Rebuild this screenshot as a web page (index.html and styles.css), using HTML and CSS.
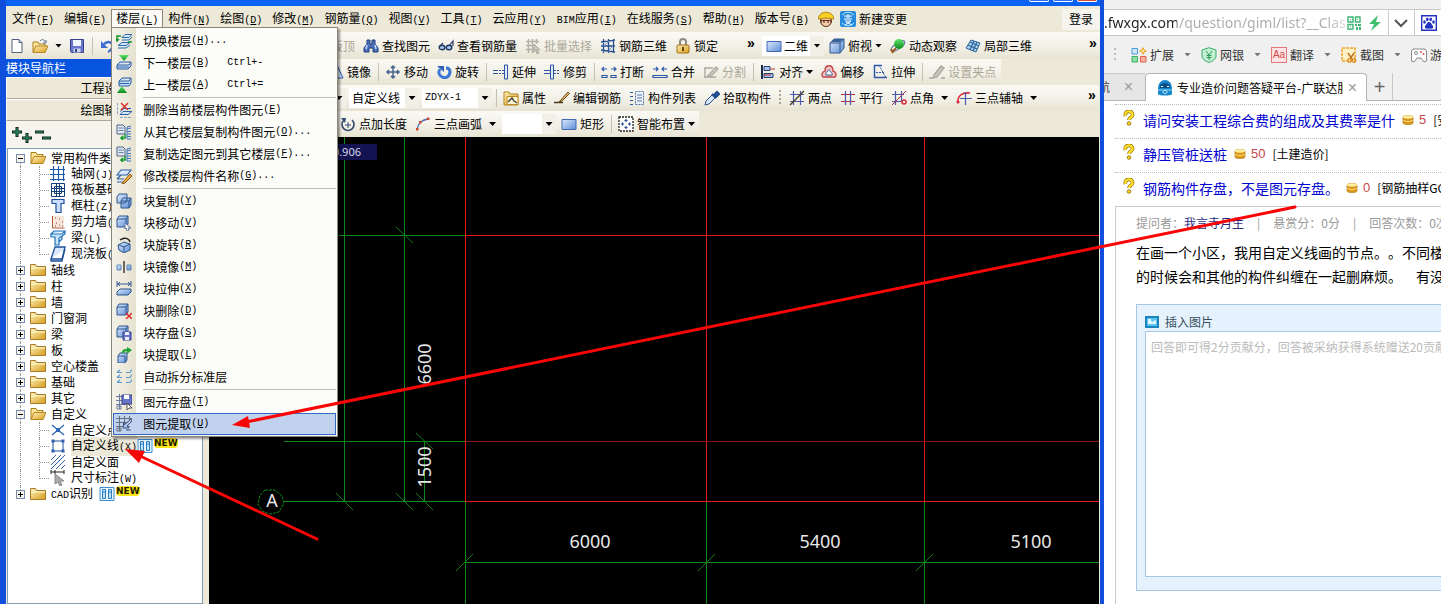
FILE: index.html
```html
<!DOCTYPE html>
<html lang="zh-CN">
<head>
<meta charset="utf-8">
<title>钢筋抽样</title>
<link rel="stylesheet" href="styles.css">
</head>
<body>
<svg class="defs" aria-hidden="true">
  <defs>
    <linearGradient id="gb" x1="0" y1="0" x2="1" y2="1"><stop offset="0" stop-color="#dbe9fc"/><stop offset="1" stop-color="#5f8fd6"/></linearGradient>
    <linearGradient id="gf" x1="0" y1="0" x2="1" y2="1"><stop offset="0" stop-color="#fff3b8"/><stop offset="1" stop-color="#d99a1c"/></linearGradient>
    <linearGradient id="gg" x1="0" y1="0" x2="0" y2="1"><stop offset="0" stop-color="#5fe36a"/><stop offset="1" stop-color="#0a8a1c"/></linearGradient>
  </defs>
  <symbol id="new" viewBox="0 0 16 16"><path d="M3 1.500h7l3 3v10H3z" fill="#fff" stroke="#52617c"/><path d="M10 1.500v3h3" fill="#c5d4ea" stroke="#52617c"/></symbol>
  <symbol id="open" viewBox="0 0 16 16"><path d="M1 14V4h5l1 2h6v3" fill="#ffe59a" stroke="#a87d1c"/><path d="M1 14.500 4 8h12l-3 6.500z" fill="url(#gf)" stroke="#b58522"/><path d="M8 3c2-2 4-2 5 1m1-2v3h-3" fill="none" stroke="#58709b"/></symbol>
  <symbol id="openf" viewBox="0 0 16 16"><path d="M1 13.500V2.500h5l1 2h6v3" fill="#ffe59a" stroke="#a87d1c"/><path d="M1 13.500 4 6.500h12l-3 7z" fill="url(#gf)" stroke="#b58522"/></symbol>
  <symbol id="save" viewBox="0 0 16 16"><path d="M1.500 1.500h13v13h-12l-1-1z" fill="#6875c8" stroke="#35408e"/><path d="M4 2h8v6H4z" fill="#f1f5ff"/><path d="M4.500 10.500h7v4h-7z" fill="#d2d8ee"/><path d="M6 11h2v3H6z" fill="#35408e"/></symbol>
  <symbol id="undo" viewBox="0 0 16 16"><path d="M4 6c5-4 10-1 8 4-1 2-2 3-4 4" fill="none" stroke="#3d6fd0" stroke-width="2.500"/><path d="M1 3v7h7z" fill="#3d6fd0"/></symbol>
  <symbol id="find" viewBox="0 0 16 16"><path d="M4 2h3v4h2V2h3v4l3 4v4h-5v-4H6v4H1v-4l3-4z" fill="#4b6fb8" stroke="#233f7c"/><path d="M4 7l-1 4M12 7l1 4" stroke="#c8dbff" stroke-width="1.500"/></symbol>
  <symbol id="glasses" viewBox="0 0 16 16"><path d="M2 8l3-3M11 8l4-5v5" fill="none" stroke="#2c3d63" stroke-width="1.200"/><ellipse cx="4" cy="9.500" rx="2.800" ry="2.200" fill="#a8c8ef" stroke="#20355f" stroke-width="1.400"/><ellipse cx="11" cy="9.500" rx="2.800" ry="2.200" fill="#a8c8ef" stroke="#20355f" stroke-width="1.400"/></symbol>
  <symbol id="gridsel" viewBox="0 0 16 16"><path d="M1 3.500h13M1 7.500h8M1 11.500h8M3.500 1v14M7.500 1v14M11.500 1v5" stroke="#b4b3a9" stroke-width="1.500"/><path d="M9 6l6 6h-3l2 3-2 1-1-4-2 2z" fill="#c9c8bf" stroke="#aaa99f"/></symbol>
  <symbol id="grid3d" viewBox="0 0 16 16"><path d="M1 4l14-2M1 8h14M1 12l14 2M3.500 1v14M8.500 1v14M13.500 1v14" stroke="#274f91" fill="none" stroke-width="1.300"/><path d="M4 8l4-4M9 12l4-4" stroke="#6c99da"/></symbol>
  <symbol id="lock" viewBox="0 0 16 16"><path d="M5 8V4c0-4 6-4 6 0v4" fill="none" stroke="#8d8b85" stroke-width="2"/><rect x="2" y="7" width="12" height="8" rx="1" fill="url(#gf)" stroke="#a0701a"/><path d="M8 9v4" stroke="#6a4307" stroke-width="2"/></symbol>
  <symbol id="rect" viewBox="0 0 16 16"><path d="M1 3.500h14v10H1z" fill="url(#gb)" stroke="#4469b4"/></symbol>
  <symbol id="cube" viewBox="0 0 16 16"><path d="M1 5l4-4h10v9l-4 5H1z" fill="url(#gb)" stroke="#35578f"/><path d="M1 5h10v10M11 5l4-4" fill="none" stroke="#35578f"/><path d="M2 4l4-3h8l-3 3z" fill="#3b6196"/></symbol>
  <symbol id="orbit" viewBox="0 0 16 16"><ellipse cx="8" cy="8" rx="8" ry="3" transform="rotate(-35 8 8)" fill="#fff" stroke="#54729b"/><circle cx="9" cy="6" r="5" fill="url(#gg)"/><path d="M2 14l4-4M1 11l2 4" stroke="#a05c24" stroke-width="2"/></symbol>
  <symbol id="part3d" viewBox="0 0 16 16"><path d="M1 10 6 2l9 3-4 9z" fill="#acd0ef" stroke="#2e6398"/><path d="M3 7l9 4M5 4l9 4M9 3l-4 9M12 4 8 13" stroke="#2e6398" stroke-width="1.200"/></symbol>
  <symbol id="mirror" viewBox="0 0 16 16"><path d="M7 2v12H0zM9.500 2v12H15z" fill="#cfe0fa" stroke="#2d56a0"/></symbol>
  <symbol id="move" viewBox="0 0 16 16"><path d="M8 2v12M2 8h12M6 4l2-2 2 2M6 12l2 2 2-2M4 6 2 8l2 2M12 6l2 2-2 2" fill="none" stroke="#46628f" stroke-width="1.500"/></symbol>
  <symbol id="rotate" viewBox="0 0 16 16"><path d="M4 5c-5 8 9 13 10 3 0-3-2-4-4-4" fill="none" stroke="#3b78d6" stroke-width="3"/><path d="M1 2h7v6z" fill="#2f62b8"/></symbol>
  <symbol id="extend" viewBox="0 0 16 16"><path d="M0 6.500h5M0 9.500h5" stroke="#2c56a3"/><path d="M6 6.500h5M6 9.500h5" stroke="#2c56a3" stroke-dasharray="2 1"/><path d="M11.500 1h3v14h-3z" fill="#dce9fb" stroke="#2c56a3"/></symbol>
  <symbol id="trim" viewBox="0 0 16 16"><path d="M0 6.500h6M0 9.500h6" stroke="#2c56a3"/><path d="M10 6.500h6M10 9.500h6" stroke="#2c56a3" stroke-dasharray="2 1"/><path d="M6.500 1h3v14h-3z" fill="#dce9fb" stroke="#2c56a3"/></symbol>
  <symbol id="break" viewBox="0 0 16 16"><path d="M1 5h5M3 3 1 5l2 2M15 5h-5M13 3l2 2-2 2M1 11.500h5v2H1zM10 11.500h5v2h-5z" fill="none" stroke="#2f5aa8" stroke-width="1.200"/></symbol>
  <symbol id="merge" viewBox="0 0 16 16"><path d="M1 5h5M4 3l2 2-2 2M15 5h-5M12 3l-2 2 2 2M1 11.500h14v2H1z" fill="none" stroke="#2f5aa8" stroke-width="1.200"/></symbol>
  <symbol id="split" viewBox="0 0 16 16"><path d="M1 4h9M1 13h12M2 4v9M5 12l8-9 2 2-8 8z" fill="#d8d7ce" stroke="#aaa99f" stroke-width="1.300"/></symbol>
  <symbol id="align" viewBox="0 0 16 16"><path d="M2 1v14" stroke="#1b2a4d" stroke-width="2"/><path d="M4 2.500h6v4H4zM4 9.500h9v4H4z" fill="#a8c3ee" stroke="#27406f"/><path d="M15 5h-5M4 11h7" stroke="#c22a2a"/></symbol>
  <symbol id="offset" viewBox="0 0 16 16"><path d="M2 13c-2-2-1-5 2-6 0-7 8-7 8 0 3 1 4 4 2 6z" fill="#f3c6c6" stroke="#c24545" stroke-width="1.400"/><path d="M5 11c-1-2 1-2 1.500-4 1-2 2.500-1 3 1 2 1 2 2 1.500 3z" fill="#fff" stroke="#35578f"/></symbol>
  <symbol id="stretch" viewBox="0 0 16 16"><path d="M10 1.500H2.500v12H15" fill="none" stroke="#2f5aa8" stroke-width="1.500"/><path d="M7 1l7 13M4 8.500h8" fill="none" stroke="#2f5aa8" stroke-dasharray="2 1"/></symbol>
  <symbol id="grip" viewBox="0 0 16 16"><path d="M0 14h4m8 0h4M5 11l7-9 3 2-7 9-4 1z" fill="#c9c8bf" stroke="#aaa99f" stroke-width="1.300"/></symbol>
  <symbol id="prop" viewBox="0 0 16 16"><path d="M1 2h5l1 2h8v11H1z" fill="url(#gf)" stroke="#b58522"/><path d="M4 6.500h11v8H4z" fill="#fff7cf" stroke="#c08a22"/><path d="M5 12l4-4 2 3 3 2" fill="none" stroke="#444" stroke-width="1.500"/></symbol>
  <symbol id="editbar" viewBox="0 0 16 16"><path d="M0 12.500h9" stroke="#4a3b20" stroke-width="1.500"/><path d="M5 12 14 2l1.500 1.500L8 11l-3 1z" fill="#e0b267" stroke="#6d4c1a"/></symbol>
  <symbol id="list" viewBox="0 0 16 16"><path d="M1 2.500h3M1 6.500h3M1 10.500h3M1 14.500h3" stroke="#2f5aa8"/><path d="M6.500 1.500h8v13h-8z" fill="#eef4fd" stroke="#5574a8" stroke-dasharray="2 1"/><path d="M8 5h5M8 8h5M8 11h5" stroke="#5574a8"/></symbol>
  <symbol id="pick" viewBox="0 0 16 16"><path d="M1 15l1-4 7-7 3 3-7 7z" fill="#d8e7fa" stroke="#2b4f86"/><path d="M8 4l4 4M10 5l3-3 2 2-3 3z" fill="#2f6ac0" stroke="#1e4788" stroke-width="2"/></symbol>
  <symbol id="two" viewBox="0 0 16 16"><path d="M1 4.500h14M1 11.500h14M4.500 1v14M11.500 1v14" stroke="#4a5aa8" stroke-width="1.200"/><path d="M1 15 15 1" stroke="#4c4424" stroke-width="1.500"/></symbol>
  <symbol id="par" viewBox="0 0 16 16"><path d="M1 4.500h14M1 11.500h14" stroke="#b02d45" stroke-width="1.200"/><path d="M5.500 1v14M10.500 1v14" stroke="#4a5aa8" stroke-width="1.200"/></symbol>
  <symbol id="ang" viewBox="0 0 16 16"><path d="M1 4.500h12M1 11.500h10M4.500 1v14M10.500 1v10" stroke="#4a5aa8" stroke-width="1.200"/><path d="M1 15 15 1" stroke="#b02d45"/><circle cx="13" cy="12" r="2" fill="none" stroke="#d92a3e" stroke-width="1.500"/></symbol>
  <symbol id="arcaxis" viewBox="0 0 16 16"><path d="M2 13C1 6 6 2 14 3" fill="none" stroke="#d92a3e" stroke-width="1.600"/><path d="M4 8.500h12M9.500 2v13" stroke="#4a5aa8" stroke-width="1.200"/><circle cx="2" cy="12" r="1.600" fill="#d92a3e"/></symbol>
  <symbol id="ptlen" viewBox="0 0 16 16"><path d="M4 4a6 6 0 1 0 8 0" fill="none" stroke="#33496f" stroke-width="1.600"/><path d="M1 2h5L5 7z" fill="#33496f"/><path d="M5 9h6M8 6v6" stroke="#33496f"/></symbol>
  <symbol id="arc" viewBox="0 0 16 16"><path d="M2 14C3 7 6 4 13 3" fill="none" stroke="#4a62a8" stroke-width="1.300"/><path d="M1 12h2.500v2.500H1zM4 5h2.500v2.500H4zM12 1.500h2.500V4H12z" fill="#cf4a34"/></symbol>
  <symbol id="smart" viewBox="0 0 16 16"><path d="M1 1h14v14H1z" fill="#fff" stroke="#222" stroke-dasharray="2 1" stroke-width="1.300"/><path d="M8 3v3M8 10v3M3 8h3M10 8h3M6.500 4.500h3M6.500 11.500h3M4.500 6.500v3M11.500 6.500v3" stroke="#294f92" stroke-width="1.200"/></symbol>
  <symbol id="worker" viewBox="0 0 16 16"><circle cx="8" cy="10" r="5.500" fill="#f1c39c" stroke="#5a2f1c"/><path d="M3 9h10l-1 5-2-2H6l-2 2z" fill="#6b3020"/><path d="M4 10h8v3l-4 2-4-2z" fill="#f4cda8"/><path d="M0 8C1-1 15-1 16 8l-8-1z" fill="#f7cf27" stroke="#b1860c"/><path d="M5 11h2M9 11h2" stroke="#311"/></symbol>
  <symbol id="change" viewBox="0 0 16 16"><rect width="16" height="16" rx="2" fill="#278be0"/><path d="M2 4a8 8 0 0 1 12 0M2 12a8 8 0 0 0 12 0" stroke="#aee0ff" fill="none"/><path d="M4 5h8M8 3v2M7 5v4M9 5v4M5 7v2M11 7v2M5 10h6l-6 4M6 11l6 3" stroke="#fff" fill="none"/></symbol>
  <symbol id="layers" viewBox="0 0 16 16"><path d="M2 12.500h8l4-3H6zM2 15h8l4-3M6 4.500h7l3-3H9zM6 7h7l3-3" fill="#d2e6fb" stroke="#2d6ba6"/><path d="M5 3H1v4M0 5l1 3 2-2M12 9h3v-1" fill="none" stroke="#12962c" stroke-width="1.500"/></symbol>
  <symbol id="down" viewBox="0 0 16 16"><path d="M3 0h10L8 6z" fill="url(#gg)"/><path d="M1 10l3-3h11l-2 3zM1 10v4h11l3-3V7M1 12h12" fill="#c6defa" stroke="#2c5fa5"/></symbol>
  <symbol id="up" viewBox="0 0 16 16"><path d="M3 4l3-3h9l-2 3zM3 4v5h10l2-3V1M3 6.500h10" fill="#c6defa" stroke="#2c5fa5"/><path d="M1 16h10L6 9z" fill="url(#gg)"/></symbol>
  <symbol id="dellayer" viewBox="0 0 16 16"><path d="M1.500 1v12M4 15.500h12" stroke="#8ba2c8" stroke-dasharray="3 1"/><path d="M4 12.500h8l4-3H7zM4 9.500l4-3h7" fill="#d2e6fb" stroke="#2c5fa5"/><path d="M5 1l7 7M12 1 5 8" stroke="#d33" stroke-width="1.500"/></symbol>
  <symbol id="copylayer" viewBox="0 0 16 16"><path d="M1 1h6l2 2v7H1z" fill="#dfe7f2" stroke="#4f6484"/><path d="M2.500 4h5M2.500 6.500h5" stroke="#6d82a2"/><path d="M11 3l4-1M11 5l4-1M11 7.500h4M11 10h4M11 12.500h4M11 15h4M11 3v12" stroke="#3d76bd"/><path d="M9 10v4H5M7 12l-2 2 2 2" fill="none" stroke="#159c31" stroke-width="1.600"/></symbol>
  <symbol id="rename" viewBox="0 0 16 16"><path d="M1 7l4-5h10l-4 5zM1 11l4-4M1 11h7M1 14h7" fill="#dcebfc" stroke="#2c5fa5" stroke-width="1.200"/><path d="M7 14l7-8 2 2-7 7-3 1z" fill="#f0a640" stroke="#8b591c"/></symbol>
  <symbol id="blk" viewBox="0 0 16 16"><path d="M1 4l2-3h9v8l-2 3H1z" fill="url(#gb)" stroke="#2e568e"/><path d="M1 4h9v8M10 4l2-3" fill="none" stroke="#2e568e"/></symbol>
  <symbol id="bcopy" viewBox="0 0 16 16"><path d="M1 4l2-3h8v6l-2 3H1zM5 8l2-3h8v7l-2 3H5z" fill="url(#gb)" stroke="#2e568e"/><path d="M5 8h8v7M13 8l2-3" fill="none" stroke="#2e568e"/></symbol>
  <symbol id="bmove" viewBox="0 0 16 16"><use href="#blk"/><path d="M9 8l6 5h-3l1 2-2 1-1-3-1 1z" fill="#fff" stroke="#64789b"/></symbol>
  <symbol id="brot" viewBox="0 0 16 16"><path d="M2 8l6-3 6 2v6l-6 3-5-3z" fill="url(#gb)" stroke="#2e568e"/><path d="M3 8l5 2v5M8 10l6-3" fill="none" stroke="#2e568e"/><path d="M4 3c4-3 9-2 10 2" fill="none" stroke="#222" stroke-width="1.400"/></symbol>
  <symbol id="bmir" viewBox="0 0 16 16"><path d="M8 2v12" stroke="#222" stroke-width="1.300"/><path d="M1 6h4v5H1zM11 6h4v5h-4z" fill="url(#gb)" stroke="#6387b8"/></symbol>
  <symbol id="bstr" viewBox="0 0 16 16"><path d="M1 3h14M1 0v6M15 0v6M4 1 2 3l2 2M12 1l2 2-2 2" fill="none" stroke="#35578f"/><path d="M1 11l3-3h11v3l-3 3H1z" fill="url(#gb)" stroke="#2e568e"/></symbol>
  <symbol id="bdel" viewBox="0 0 16 16"><use href="#blk"/><path d="M10 10l6 6M16 10l-6 6" stroke="#e02727" stroke-width="1.500"/></symbol>
  <symbol id="bsave" viewBox="0 0 16 16"><use href="#blk"/><path d="M7 7h8v8H7z" fill="#6875c8" stroke="#35408e"/><path d="M9 7h4v3H9zM9 12h4v3H9z" fill="#eef"/></symbol>
  <symbol id="bext" viewBox="0 0 16 16"><path d="M2 9l2-3h7v7l-2 3H2z" fill="url(#gb)" stroke="#2e568e"/><path d="M2 9h7v6" fill="none" stroke="#2e568e"/><path d="M7 6c0-3 2-3 5-3" fill="none" stroke="#22a434" stroke-width="2.500"/><path d="M11 0l5 3-5 4z" fill="#22a434"/></symbol>
  <symbol id="auto" viewBox="0 0 16 16"><path d="M1 3.500 4 1M1 3.500h5M1 8.500 4 6M1 8.500h5M1 13.500 4 11M1 13.500h5M10 3.500h4l2-3M10 8.500h4l2-3M10 13.500h4l2-3" fill="none" stroke="#5a9ad0" stroke-width="1.200"/></symbol>
  <symbol id="esave" viewBox="0 0 16 16"><path d="M0 2.500h6M0 6.500h6M0 10.500h14M3.500 0v15M1 12h4v3H1z" fill="none" stroke="#6c7da0"/><path d="M6 1h10v9H6z" fill="#6875c8" stroke="#35408e"/><path d="M8 1h5v4H8z" fill="#fff"/><path d="M11 9l5 5h-3l-2 2z" fill="#fff" stroke="#555"/></symbol>
  <symbol id="eext" viewBox="0 0 16 16"><path d="M0 2.500h16M0 6.500h12M0 10.500h14M3.500 0v15M8.500 0v12M13.500 0v4M1 12h4v3H1z" fill="none" stroke="#66707f"/><path d="M15 3 8 9V6l-1 6h6l-2-2 5-5z" fill="#b2c5e5" stroke="#3c5584"/><path d="M10 14h5" stroke="#3c5584"/></symbol>
  <symbol id="folder" viewBox="0 0 16 16"><path d="M.5 13.500V2.500h5l1 2h9v9z" fill="url(#gf)" stroke="#a57b2a"/><path d="M1 6h14" stroke="#fffbe0"/></symbol>
  <symbol id="axis" viewBox="0 0 16 16"><path d="M0 3.500h15M0 8.500h15M0 13.500h15M3.500 0v15M8.500 0v15M13.500 0v15" stroke="#1c57a8" stroke-width="1.200"/></symbol>
  <symbol id="raft" viewBox="0 0 16 16"><path d="M1.500 1.500h13v13h-13zM4.500 4.500h7v7h-7zM6.500 2v12M9.500 2v12M2 6.500h12M2 9.500h12" fill="none" stroke="#123f7e"/></symbol>
  <symbol id="col" viewBox="0 0 16 16"><path d="M2 1.500h12v4h-3v9H6v-9H2z" fill="#c9defa" stroke="#1d4f98" stroke-width="1.200"/></symbol>
  <symbol id="wall" viewBox="0 0 16 16"><path d="M2.500 2v12h12" fill="none" stroke="#b05a33"/><path d="M3 2h11v11H3z" fill="#f6e6dc"/><path d="M5 4h1M9 5h1M12 8h1M6 9h1M9 11h1M5 12h1M12 12h1" stroke="#9b3c2a"/></symbol>
  <symbol id="beam" viewBox="0 0 16 16"><path d="M1 4l3-3h11l-3 3zM1 4v3h4v8h4V8l6-4V1M9 12l3-3V6" fill="#c9e4fb" stroke="#2372b8" stroke-width="1.200"/></symbol>
  <symbol id="slab" viewBox="0 0 16 16"><path d="M1 13 5 1h10l-3 12zM1 13v2h11l3-12" fill="#d9e8fb" stroke="#1d4f98" stroke-width="1.300"/></symbol>
  <symbol id="cpt" viewBox="0 0 16 16"><path d="M2 3l12 10M14 3 2 13" stroke="#2d68bd" stroke-width="1.300"/><path d="M6 6h4v4H6z" fill="#2d68bd"/></symbol>
  <symbol id="cline" viewBox="0 0 16 16"><path d="M3 3h10v10H3z" fill="none" stroke="#1d4f98"/><path d="M1.500 1.500h3v3h-3zM11.500 1.500h3v3h-3zM1.500 11.500h3v3h-3zM11.500 11.500h3v3h-3z" fill="#2d5fae"/></symbol>
  <symbol id="cface" viewBox="0 0 16 16"><path d="M1 6l5-5M1 11 11 1M1 15 15 1M6 15l9-9M11 15l4-4" stroke="#2d5fae"/></symbol>
  <symbol id="dim" viewBox="0 0 16 16"><path d="M1 0v4M1 2h13M14 0v4M5 0v4" stroke="#222"/><path d="M5 4l9 7h-4l2 4-2 1-2-4-3 2z" fill="#aaa" stroke="#888"/></symbol>
  <symbol id="book" viewBox="0 0 16 16"><path d="M1 1.500h14v13H1z" fill="#e8f5ff" stroke="#3d8ccc"/><path d="M3.500 3.500h3v9h-3zM9.500 3.500h3v9h-3zM3.500 6h3M9.500 6h3" fill="#bfe4ff" stroke="#2a7cc0"/></symbol>
  <symbol id="q" viewBox="0 0 12 16"><path d="M2.500 6C1 0 10 0 9.500 5 9 8 6 7 6 10" fill="none" stroke="#8a6505" stroke-width="3.600"/><path d="M2.500 6C1 0 10 0 9.500 5 9 8 6 7 6 10" fill="none" stroke="#ffde26" stroke-width="2.400"/><circle cx="6" cy="13.500" r="1.800" fill="#ffd619" stroke="#8a6505" stroke-width=".8"/></symbol>
  <symbol id="coin" viewBox="0 0 12 12"><path d="M1 3c0-2 10-2 10 0v6c0 2-10 2-10 0z" fill="#dc961b" stroke="#b67c1a" stroke-width=".7"/><ellipse cx="6" cy="3" rx="5" ry="1.700" fill="#fff09d"/><path d="M1 6c1 2 9 2 10 0" fill="none" stroke="#ffe47b"/></symbol>
</svg>

<div class="desktop">
<main class="app">
  <header class="titlebar">
    <button class="winbtn" aria-label="最小化"></button><button class="winbtn" aria-label="最大化"></button><button class="winbtn close" aria-label="关闭"></button>
  </header>

  <nav class="menubar">
    <button class="menu">文件<span class="key">(<u>F</u>)</span></button>
    <button class="menu">编辑<span class="key">(<u>E</u>)</span></button>
    <div class="menuwrap">
      <button class="menu opened" aria-expanded="true">楼层<span class="key">(<u>L</u>)</span></button>
      <div class="dropdown">
        <button class="mi"><svg class="ic"><use href="#layers"/></svg>切换楼层<span class="key">(<u>H</u>)...</span></button>
        <button class="mi"><svg class="ic"><use href="#down"/></svg>下一楼层<span class="key">(<u>B</u>)</span><span class="short">Ctrl+-</span></button>
        <button class="mi"><svg class="ic"><use href="#up"/></svg>上一楼层<span class="key">(<u>A</u>)</span><span class="short">Ctrl+=</span></button>
        <hr>
        <button class="mi"><svg class="ic"><use href="#dellayer"/></svg>删除当前楼层构件图元<span class="key">(<u>E</u>)</span></button>
        <button class="mi"><svg class="ic"><use href="#copylayer"/></svg>从其它楼层复制构件图元<span class="key">(<u>O</u>)...</span></button>
        <button class="mi"><svg class="ic"><use href="#copylayer"/></svg>复制选定图元到其它楼层<span class="key">(<u>F</u>)...</span></button>
        <button class="mi"><svg class="ic"><use href="#rename"/></svg>修改楼层构件名称<span class="key">(<u>G</u>)...</span></button>
        <hr>
        <button class="mi"><svg class="ic"><use href="#bcopy"/></svg>块复制<span class="key">(<u>Y</u>)</span></button>
        <button class="mi"><svg class="ic"><use href="#bmove"/></svg>块移动<span class="key">(<u>V</u>)</span></button>
        <button class="mi"><svg class="ic"><use href="#brot"/></svg>块旋转<span class="key">(<u>R</u>)</span></button>
        <button class="mi"><svg class="ic"><use href="#bmir"/></svg>块镜像<span class="key">(<u>M</u>)</span></button>
        <button class="mi"><svg class="ic"><use href="#bstr"/></svg>块拉伸<span class="key">(<u>X</u>)</span></button>
        <button class="mi"><svg class="ic"><use href="#bdel"/></svg>块删除<span class="key">(<u>D</u>)</span></button>
        <button class="mi"><svg class="ic"><use href="#bsave"/></svg>块存盘<span class="key">(<u>S</u>)</span></button>
        <button class="mi"><svg class="ic"><use href="#bext"/></svg>块提取<span class="key">(<u>L</u>)</span></button>
        <button class="mi"><svg class="ic"><use href="#auto"/></svg>自动拆分标准层</button>
        <hr>
        <button class="mi"><svg class="ic"><use href="#esave"/></svg>图元存盘<span class="key">(<u>T</u>)</span></button>
        <button class="mi hot"><svg class="ic"><use href="#eext"/></svg>图元提取<span class="key">(<u>U</u>)</span></button>
      </div>
    </div>
    <button class="menu">构件<span class="key">(<u>N</u>)</span></button>
    <button class="menu">绘图<span class="key">(<u>D</u>)</span></button>
    <button class="menu">修改<span class="key">(<u>M</u>)</span></button>
    <button class="menu">钢筋量<span class="key">(<u>Q</u>)</span></button>
    <button class="menu">视图<span class="key">(<u>V</u>)</span></button>
    <button class="menu">工具<span class="key">(<u>T</u>)</span></button>
    <button class="menu">云应用<span class="key">(<u>Y</u>)</span></button>
    <button class="menu"><span class="key">BIM</span>应用<span class="key">(<u>I</u>)</span></button>
    <button class="menu">在线服务<span class="key">(<u>S</u>)</span></button>
    <button class="menu">帮助<span class="key">(<u>H</u>)</span></button>
    <button class="menu">版本号<span class="key">(<u>B</u>)</span></button>
    <button class="tool face" aria-label="助手"><svg class="ic"><use href="#worker"/></svg></button>
    <button class="tool change"><svg class="ic"><use href="#change"/></svg>新建变更</button>
    <button class="login">登录</button>
  </nav>

  <div class="toprow">
    <div class="bar main">
      <div class="filebar">
        <button class="tool" aria-label="新建"><svg class="ic"><use href="#new"/></svg></button>
        <button class="tool" aria-label="打开"><svg class="ic"><use href="#open"/></svg><i class="dn far"></i></button>
        <button class="tool" aria-label="保存"><svg class="ic"><use href="#save"/></svg></button>
        <i class="sep"></i>
        <button class="tool" aria-label="撤销"><svg class="ic"><use href="#undo"/></svg></button>
        <button class="tool off last">板顶</button>
      </div>
      <button class="tool"><svg class="ic"><use href="#find"/></svg>查找图元</button>
      <button class="tool"><svg class="ic"><use href="#glasses"/></svg>查看钢筋量</button>
      <button class="tool off"><svg class="ic"><use href="#gridsel"/></svg>批量选择</button>
      <button class="tool"><svg class="ic"><use href="#grid3d"/></svg>钢筋三维</button>
      <button class="tool"><svg class="ic"><use href="#lock"/></svg>锁定</button>
      <button class="more" aria-label="更多">»</button>
    </div>
    <div class="bar view">
      <label class="combo dim"><svg class="ic"><use href="#rect"/></svg><select aria-label="视图维度"><option>二维</option></select><i class="dn"></i></label>
      <button class="tool"><svg class="ic"><use href="#cube"/></svg>俯视<i class="dn"></i></button>
      <button class="tool"><svg class="ic"><use href="#orbit"/></svg>动态观察</button>
      <button class="tool"><svg class="ic"><use href="#part3d"/></svg>局部三维</button>
      <button class="more" aria-label="更多">»</button>
    </div>
  </div>

  <div class="work">
    <aside class="side">
      <h2>模块导航栏</h2>
      <button class="page">工程设置</button>
      <button class="page">绘图输入</button>
      <div class="plus">
        <svg width="40" height="16" aria-hidden="true"><path d="M5 0v10M0 5h10M15 6v10M10 11h10" stroke="#10251c" stroke-width="3"/><path d="M5 1v8M1 5h8M15 7v8M11 11h8" stroke="#2aa06c"/><path d="M23 5h9M30 11h9" stroke="#10251c" stroke-width="3"/><path d="M24 5h7M31 11h7" stroke="#2aa06c"/></svg>
      </div>
      <ul class="tree">
        <li><i class="ex minus"></i><svg class="ic"><use href="#openf"/></svg><span>常用构件类型</span></li>
        <li class="sub"><svg class="ic"><use href="#axis"/></svg><span>轴网<b class="key">(J)</b></span></li>
        <li class="sub"><svg class="ic"><use href="#raft"/></svg><span>筏板基础<b class="key">(M)</b></span></li>
        <li class="sub"><svg class="ic"><use href="#col"/></svg><span>框柱<b class="key">(Z)</b></span></li>
        <li class="sub"><svg class="ic"><use href="#wall"/></svg><span>剪力墙<b class="key">(Q)</b></span></li>
        <li class="sub"><svg class="ic"><use href="#beam"/></svg><span>梁<b class="key">(L)</b></span></li>
        <li class="sub end"><svg class="ic"><use href="#slab"/></svg><span>现浇板<b class="key">(B)</b></span></li>
        <li><i class="ex"></i><svg class="ic"><use href="#folder"/></svg><span>轴线</span></li>
        <li><i class="ex"></i><svg class="ic"><use href="#folder"/></svg><span>柱</span></li>
        <li><i class="ex"></i><svg class="ic"><use href="#folder"/></svg><span>墙</span></li>
        <li><i class="ex"></i><svg class="ic"><use href="#folder"/></svg><span>门窗洞</span></li>
        <li><i class="ex"></i><svg class="ic"><use href="#folder"/></svg><span>梁</span></li>
        <li><i class="ex"></i><svg class="ic"><use href="#folder"/></svg><span>板</span></li>
        <li><i class="ex"></i><svg class="ic"><use href="#folder"/></svg><span>空心楼盖</span></li>
        <li><i class="ex"></i><svg class="ic"><use href="#folder"/></svg><span>基础</span></li>
        <li><i class="ex"></i><svg class="ic"><use href="#folder"/></svg><span>其它</span></li>
        <li><i class="ex minus"></i><svg class="ic"><use href="#openf"/></svg><span>自定义</span></li>
        <li class="sub"><svg class="ic"><use href="#cpt"/></svg><span>自定义点</span></li>
        <li class="sub"><svg class="ic"><use href="#cline"/></svg><span class="picked">自定义线<b class="key">(X)</b></span><svg class="ic"><use href="#book"/></svg><em>NEW</em></li>
        <li class="sub"><svg class="ic"><use href="#cface"/></svg><span>自定义面</span></li>
        <li class="sub end"><svg class="ic"><use href="#dim"/></svg><span>尺寸标注<b class="key">(W)</b></span></li>
        <li class="lastroot"><i class="ex"></i><svg class="ic"><use href="#folder"/></svg><span class="cad"><b class="key">CAD</b>识别</span><svg class="ic"><use href="#book"/></svg><em>NEW</em></li>
      </ul>
    </aside>

    <section class="stage">
      <div class="bars">
        <div class="bar edit">
          <button class="tool"><svg class="ic"><use href="#mirror"/></svg>镜像</button>
          <i class="sep"></i>
          <button class="tool"><svg class="ic"><use href="#move"/></svg>移动</button>
          <button class="tool"><svg class="ic"><use href="#rotate"/></svg>旋转</button>
          <i class="sep"></i>
          <button class="tool"><svg class="ic"><use href="#extend"/></svg>延伸</button>
          <button class="tool"><svg class="ic"><use href="#trim"/></svg>修剪</button>
          <i class="sep"></i>
          <button class="tool"><svg class="ic"><use href="#break"/></svg>打断</button>
          <button class="tool"><svg class="ic"><use href="#merge"/></svg>合并</button>
          <button class="tool off"><svg class="ic"><use href="#split"/></svg>分割</button>
          <i class="sep"></i>
          <button class="tool"><svg class="ic"><use href="#align"/></svg>对齐<i class="dn"></i></button>
          <button class="tool"><svg class="ic"><use href="#offset"/></svg>偏移</button>
          <button class="tool"><svg class="ic"><use href="#stretch"/></svg>拉伸</button>
          <i class="sep"></i>
          <button class="tool off"><svg class="ic"><use href="#grip"/></svg>设置夹点</button>
        </div>
        <div class="bar pickrow">
          <label class="combo kind"><select aria-label="类别"><option>自定义</option></select><i class="dn"></i></label>
          <label class="combo type"><select aria-label="构件类型"><option>自定义线</option></select><i class="dn"></i></label>
          <label class="combo name"><select aria-label="构件名称"><option>ZDYX-1</option></select><i class="dn"></i></label>
          <i class="sep"></i>
          <button class="tool"><svg class="ic"><use href="#prop"/></svg>属性</button>
          <button class="tool"><svg class="ic"><use href="#editbar"/></svg>编辑钢筋</button>
          <button class="tool"><svg class="ic"><use href="#list"/></svg>构件列表</button>
          <button class="tool"><svg class="ic"><use href="#pick"/></svg>拾取构件</button>
          <i class="handle"></i>
          <button class="tool"><svg class="ic"><use href="#two"/></svg>两点</button>
          <button class="tool"><svg class="ic"><use href="#par"/></svg>平行</button>
          <button class="tool"><svg class="ic"><use href="#ang"/></svg>点角<i class="dn far"></i></button>
          <button class="tool"><svg class="ic"><use href="#arcaxis"/></svg>三点辅轴<i class="dn far"></i></button>
          <button class="more" aria-label="更多">»</button>
        </div>
        <div class="bar draw">
          <button class="tool"><svg class="ic"><use href="#ptlen"/></svg>点加长度</button>
          <button class="tool"><svg class="ic"><use href="#arc"/></svg>三点画弧<i class="dn far"></i></button>
          <label class="combo blank"><select aria-label="半径"><option></option></select><i class="dn"></i></label>
          <button class="tool"><svg class="ic"><use href="#rect"/></svg>矩形</button>
          <i class="sep"></i>
          <button class="tool"><svg class="ic"><use href="#smart"/></svg>智能布置<i class="dn"></i></button>
        </div>
      </div>
      <div class="canvas">
        <svg width="100%" height="100%" role="img" aria-label="轴网图">
          <g transform="translate(-209 -137)" fill="none" shape-rendering="crispEdges">
            <path stroke="#0e8816" d="M344.500 137V501M404.500 137V501M424.500 441V501M209 235.500H465M284 441.500H465M284 501.500H465M465.500 501V700M706.500 501V700M924.500 501V700M465 562.500H2000"/>
            <path stroke="#e81818" d="M465.500 137V501M706.500 137V501M924.500 137V501M465 235.500H2000M465 501.500H2000"/>
            <path stroke="#8c1010" d="M466 441.500H2000"/>
            <path stroke="#0b7d12" shape-rendering="auto" d="M396 227l17 16M336 493l17 17M396 493l17 17M416 493l17 17M416 433l17 16M456 571l17-17M698 571l17-17M916 571l17-17"/>
            <path stroke="#0b8a14" stroke-dasharray="3 1" shape-rendering="auto" d="M265 490h10l7 6 2 7-5 9-9 2-8-3-4-7 2-9z"/>
          </g>
          <g transform="translate(-209 -137)" class="dims" text-anchor="middle">
            <text x="272" y="507">A</text>
            <text x="590" y="548">6000</text>
            <text x="820" y="548">5400</text>
            <text x="1031" y="548">5100</text>
            <text transform="translate(431 364) rotate(-90)">6600</text>
            <text transform="translate(431 467) rotate(-90)">1500</text>
          </g>
        </svg>
        <output class="coord">0.906</output>
      </div>
    </section>
  </div>
</main>

<section class="browser">
  <div class="address">
    <input class="url" aria-label="网址" value=".fwxgx.com/question/giml/list?__Clas">
    <svg class="ic" viewBox="0 0 16 16" aria-hidden="true"><path d="M2 2h5v5H2zM9.500 2h4.500v5H9.500zM2 9.500h5V14H2z" fill="none" stroke="#3fb573" stroke-width="1.400"/><path d="M4 4h1v1H4zM11 4h1v1h-1zM4 11h1v1H4zM9 9h2v2H9zM12 9h3v2h-3zM10 12h2v3h-2zM13 12h2v3h-2z" fill="#3fb573"/></svg>
    <svg class="ic bolt" viewBox="0 0 16 16" aria-hidden="true"><path d="M11 0 2 9h5l-3 7 10-9H9z" fill="#3fc06d"/></svg>
    <button class="addrbtn" aria-label="展开"><svg width="14" height="10" viewBox="0 0 14 10"><path d="M1 2l6 6 6-6" fill="none" stroke="#555" stroke-width="2"/></svg></button>
    <button class="addrbtn wide" aria-label="百度"><svg width="16" height="16" viewBox="0 0 16 16"><path d="M.7.700h14.600v14.600H.7z" fill="#fff" stroke="#2333c4" stroke-width="1.400"/><path d="M8 7c2 0 2 2 4 4 1 3-2 3-4 2.500C6 14 3 14 4 11c2-2 2-4 4-4z" fill="#2333c4"/><ellipse cx="3.500" cy="7" rx="1.300" ry="1.700" fill="#2333c4"/><ellipse cx="6.300" cy="4.300" rx="1.300" ry="1.900" fill="#2333c4"/><ellipse cx="9.700" cy="4.300" rx="1.300" ry="1.900" fill="#2333c4"/><ellipse cx="12.500" cy="7" rx="1.300" ry="1.700" fill="#2333c4"/></svg></button>
  </div>
  <div class="exts">
    <i class="handle"></i>
    <button class="ext"><svg class="ic" viewBox="0 0 16 16"><path d="M1 1.500h5.500V7H1z" fill="#cfe7fb" stroke="#4a9ad8"/><path d="M1 9.500h5.500V15H1z" fill="#8fe0a8" stroke="#38b060"/><path d="M9.500 9.500H15V15H9.500z" fill="#f8b0a0" stroke="#e0604a"/><path d="M12 .7l1 2.300 2.300 1L13 5l-1 2.300L11 5 8.700 4 11 3z" fill="#ffe9a0" stroke="#e8a520"/></svg>扩展<i class="dn grey"></i></button>
    <button class="ext"><svg class="ic" viewBox="0 0 16 16"><path d="M8 .7 15 3v6c0 3-3 5-7 6.500C4 14 1 12 1 9V3z" fill="#c4efd2" stroke="#3aae68"/><path d="M5 4l3 4 3-4M8 8v5M5.500 8.500h5M5.500 10.500h5" fill="none" stroke="#2c9c58"/></svg>网银<i class="dn grey"></i></button>
    <button class="ext"><span class="aa">Aa</span>翻译<i class="dn grey"></i></button>
    <button class="ext"><svg class="ic" viewBox="0 0 16 16"><path d="M1 1h13v13H1z" fill="#fff0c8" stroke="#eda52c" stroke-width="1.500" stroke-dasharray="3 1"/><path d="M7 6l4 6M13 6l-4 6" stroke="#b8751c" stroke-width="1.400"/><circle cx="8.500" cy="13.500" r="1.800" fill="none" stroke="#e08c1c" stroke-width="1.300"/><circle cx="13" cy="13.500" r="1.800" fill="none" stroke="#e08c1c" stroke-width="1.300"/></svg>截图<i class="dn grey"></i></button>
    <button class="ext"><svg class="ic" viewBox="0 0 16 16"><path d="M2 2h12l1.500 2v10L13 15l-3-4H6l-3 4-2.500-1V4z" fill="#fff" stroke="#888"/><circle cx="5" cy="6" r="1.500" fill="none" stroke="#888"/><circle cx="10" cy="5" r="1" fill="#e05050"/><circle cx="12.500" cy="7" r="1" fill="#e05050"/></svg>游戏<i class="dn grey"></i></button>
  </div>
  <div class="tabs">
    <button class="tab old"><span>航</span><i class="x">×</i></button>
    <button class="tab cur"><svg class="ic" viewBox="0 0 16 16"><path d="M1 9C1-3 15-3 15 9v5c0 2-14 2-14 0z" fill="#1687cb"/><path d="M3 5c2-2.500 8-2.500 10 0v3H3z" fill="#0b4d85"/><path d="M4 6.500h2M10 6.500h2" stroke="#fff"/><path d="M1 10h14" stroke="#8fd3f5"/><path d="M6 12c0-2 4-2 4 0s-4 2-4 0z" fill="none" stroke="#d4f2ff"/></svg><span>专业造价问题答疑平台-广联达服务</span><i class="x">×</i></button>
    <button class="tabnew" aria-label="新标签页">+</button>
  </div>
  <div class="content">
    <ul class="questions">
      <li><svg class="q"><use href="#q"/></svg><a href="#q1">请问安装工程综合费的组成及其费率是什</a><svg class="coin"><use href="#coin"/></svg><b>5</b><span>[安装造价]</span></li>
      <li><svg class="q"><use href="#q"/></svg><a href="#q2">静压管桩送桩</a><svg class="coin"><use href="#coin"/></svg><b>50</b><span>[土建造价]</span></li>
      <li><svg class="q"><use href="#q"/></svg><a href="#q3">钢筋构件存盘，不是图元存盘。</a><svg class="coin"><use href="#coin"/></svg><b>0</b><span>[钢筋抽样GGJ]</span></li>
    </ul>
    <article class="detail">
      <p class="meta">提问者：<a href="#user">我言寺月生</a><i>|</i>悬赏分：0分<i>|</i>回答次数：0次</p>
      <p class="body">在画一个小区，我用自定义线画的节点。。不同楼<br>的时候会和其他的构件纠缠在一起删麻烦。　有没</p>
      <form class="answer">
        <button type="button" class="insert"><svg width="14" height="12" viewBox="0 0 14 12"><path d="M1 1h12v10H1z" fill="#5cc4ee" stroke="#1b86bd" stroke-width="2"/><path d="M3 3h3v2l2 1 2-2 1 1v3H3z" fill="#e4f9ff"/></svg>插入图片</button>
        <textarea aria-label="回答" placeholder="回答即可得2分贡献分，回答被采纳获得系统赠送20贡献分"></textarea>
      </form>
    </article>
  </div>
</section>

<svg class="marks" aria-hidden="true">
  <path d="M1295 207 246 422M317 539 140 456" stroke="#fa0505" stroke-width="3" stroke-linecap="round"/>
  <path d="M232 425l16-9 2 12zM125 449l20 2-6 12z" fill="#fa0505"/>
</svg>
</div>
</body>
</html>
```
FILE: styles.css
```css
* { box-sizing: border-box; }
html, body { height: 100%; }
body {
  margin: 0;
  overflow: hidden;
  font: 12px/16px "Noto Sans CJK SC", sans-serif;
  text-spacing-trim: space-all;
  color: #000;
}
button, select, input, textarea { font: inherit; color: inherit; text-spacing-trim: inherit; }
button { border: 0; padding: 0; background: none; white-space: nowrap; }
i, em { font-style: normal; }
.defs { position: absolute; width: 0; height: 0; }
.ic { width: 16px; height: 16px; flex: none; overflow: visible; }
.key { font: 10px/16px "Liberation Mono", monospace; }

.desktop {
  position: relative;
  display: grid;
  grid-template-columns: minmax(0, 1fr) 337px;
  height: 100vh;
  min-height: 600px;
}

/* application window */
.app {
  display: flex;
  flex-direction: column;
  min-width: 0;
  border: solid #0f4fdc;
  border-width: 0 4px 0 6px;
  background: #ece9d8;
}
.titlebar {
  display: flex;
  justify-content: flex-end;
  gap: 4px;
  height: 6px;
  padding-right: 3px;
  background: #0862f4;
}
.winbtn { width: 20px; height: 2px; border: solid #fff; border-width: 0 1px 1px; border-radius: 0 0 3px 3px; background: #2c6ff0; }
.winbtn.close { background: #d9502c; }

.menubar { display: flex; align-items: center; height: 26px; padding-left: 1px; }
.menu { display: block; height: 21px; padding: 0 4px; border: 1px solid transparent; }
.menuwrap { position: relative; height: 21px; }
.menu.opened { background: #fbfaf6; border-color: #8a867a; border-bottom-color: #fbfaf6; }
.face { margin-left: 4px; }
.change { margin-left: 6px; }
.login { height: 21px; margin-left: auto; padding: 0 7px; background: #f5f4ee; }

.dropdown {
  position: absolute;
  z-index: 5;
  top: 18px;
  left: 0;
  width: 227px;
  padding: 2px 1px 1px;
  border: 1px solid #8a867a;
  background: linear-gradient(90deg, #f4f2e8, #e6e2d0 24px, #fcfcf9 24px);
  box-shadow: 2px 2px 2px #0006;
}
.mi { display: flex; align-items: center; width: 100%; height: 22px; padding-left: 2px; border: 1px solid transparent; }
.mi .ic { margin-right: 11px; }
.mi .short { margin-left: 18px; font: 10px/16px "Liberation Mono", monospace; }
.mi.hot { background: #c1d2ee; border-color: #316ac5; }
.dropdown hr { height: 1px; margin: 1px 0 1px 30px; border: 0; background: #c0beb4; }

/* toolbars */
.toprow { display: flex; height: 27px; }
.bar { display: flex; align-items: center; gap: 8px; background: linear-gradient(#faf9f5, #f1efe4 60%, #e6e3d2); }
.tool { display: flex; align-items: center; gap: 3px; flex: none; }
.off { color: #aca899; }
.sep { flex: none; width: 1px; height: 18px; margin: 0 -2px 0 -1px; background: #c5c2b2; }
.dn { flex: none; width: 7px; height: 4px; background: #000; clip-path: polygon(0 0, 100% 0, 50% 100%); }
.dn.far { margin-left: 4px; }
.more { width: 10px; margin: 0 2px 6px auto; font: bold 14px/16px "Liberation Sans", sans-serif; }
.main { width: 752px; padding-left: 3px; }
.filebar { display: flex; align-items: center; gap: 7px; width: 346px; }
.filebar .sep { margin: 0; }
.filebar .last { margin-left: auto; }
.view { flex: 1; min-width: 0; padding-left: 4px; }
.handle { flex: none; width: 2px; height: 16px; background: repeating-linear-gradient(#aaa795 0 2px, transparent 2px 4px); }

.combo { display: grid; grid-template-columns: 1fr 14px; align-items: center; flex: none; height: 20px; background: linear-gradient(90deg, #fff, #fff calc(100% - 14px), #f2f0e6 calc(100% - 14px)); }
.combo select { grid-area: 1 / 1 / 2 / 3; width: 100%; height: 20px; padding: 0 14px 0 3px; border: 0; background: none; appearance: none; }
.combo .dn { grid-area: 1 / 2; justify-self: center; }
.dim { width: 62px; margin-right: -3px; }
.dim .ic { grid-area: 1 / 1; margin-left: 4px; }
.dim select { padding-left: 22px; }

.work { display: flex; flex: 1; min-height: 0; }
.side { display: flex; flex-direction: column; flex: none; width: 197px; }
.side h2 { height: 18px; margin: 0; font: inherit; line-height: 17px; color: #fff; background: #0654e0; }
.page { height: 22px; border: 1px solid; border-color: #fff #aca899 #aca899 #fff; background: #ece9d8; }
.plus { height: 27px; padding: 6px 6px; background: #f6f4ec; }
.tree { flex: 1; margin: 0 0 0 1px; padding: 1px 0 0 8px; list-style: none; border: 1px solid #7f9db9; background: #fff; }
.tree li { position: relative; display: flex; align-items: center; height: 16px; white-space: nowrap; }
.tree li::before { content: ""; position: absolute; left: 4px; top: 0; height: 16px; border-left: 1px dotted #999; }
.tree li:first-child::before { top: 8px; height: 8px; }
.tree .lastroot::before { height: 8px; }
.tree li > span { margin-left: 5px; }
.tree .sub { padding-left: 34px; }
.tree .sub::after { content: ""; position: absolute; left: 23px; top: 0; width: 10px; height: 16px; border-left: 1px dotted #999; background: linear-gradient(90deg, #999 50%, transparent 50%) 0 8px / 2px 1px repeat-x; }
.tree .sub.end::after { height: 9px; }
.tree .key { font-weight: normal; }
.tree em { align-self: flex-start; margin-left: 1px; font: bold 9px/10px "DejaVu Sans", sans-serif; color: #221a00; background: #ffe81a; border-radius: 4px; }
.picked { background: #ece9d8; }
.cad { margin-right: 6px; }
.ex { position: relative; flex: none; width: 9px; height: 9px; margin-right: 5px; border: 1px solid #7b8ea8; background: linear-gradient(#000, #000) center / 5px 1px no-repeat, linear-gradient(#000, #000) center / 1px 5px no-repeat, #f4f2ea; }
.ex.minus { background: linear-gradient(#000, #000) center / 5px 1px no-repeat, #f4f2ea; }

.stage { display: flex; flex-direction: column; flex: 1; min-width: 0; padding: 0 1px 0 6px; }
.bars { display: grid; grid-template-rows: 26px 26px 26px; }
.edit { width: 792px; padding-left: 119px; }
.draw { width: 490px; padding-left: 131px; }
.pickrow { padding-left: 72px; }
.pickrow .combo + .combo { margin-left: -5px; }
.kind { width: 65px; }
.type { width: 70px; }
.name { width: 70px; margin-right: -3px; }
.name select { font: 10px/16px "Liberation Mono", monospace; }
.blank { width: 54px; margin: 0 -3px 0 -2px; }

.canvas { position: relative; flex: 1; min-height: 0; overflow: hidden; background: #000; }
.canvas svg { display: block; }
.dims { font: 18px "Noto Sans", sans-serif; fill: #e8e8e8; }
.coord { position: absolute; left: 120px; top: 7px; width: 48px; height: 16px; padding-right: 16px; font: 11px/16px "Noto Sans", sans-serif; color: #d8d8e8; background: #131352; text-align: right; }

/* browser window */
.browser { display: flex; flex-direction: column; min-width: 0; padding-top: 9px; overflow: hidden; background: #f0f0f0; }
.address { display: flex; align-items: center; flex: none; height: 27px; border: solid #c8c8c8; border-width: 1px 0; background: #fff; }
.url { width: 241px; flex: none; padding: 0; border: 0; outline: 0; margin-right: 1px; font: 14px/20px "Noto Sans", sans-serif; color: transparent; background: linear-gradient(90deg, #222 73px, #aaa 73px 222px, #ddd); background-clip: text; -webkit-background-clip: text; }
.bolt { margin: 0 5px; }
.addrbtn { display: grid; place-items: center; width: 26px; height: 25px; border-left: 1px solid #ccc; }
.addrbtn.wide { width: 28px; padding-left: 2px; }
.exts { display: flex; align-items: center; flex: none; gap: 10px; height: 37px; padding-left: 10px; color: #333; }
.exts .handle { height: 14px; margin-right: 5px; background: repeating-linear-gradient(#bbb 0 2px, transparent 2px 5px); }
.ext { display: flex; align-items: center; gap: 3px; flex: none; width: 60px; }
.ext .dn { margin-left: auto; }
.dn.grey { background: #777; }
.aa { width: 16px; height: 16px; border: 1px solid #e07a7a; background: #fde3e3; font: 10px/14px "Liberation Sans", sans-serif; color: #d34a4a; text-align: center; }
.tabs { display: flex; align-items: stretch; flex: none; height: 28px; border-bottom: 1px solid #b5b5b5; }
.tab { display: flex; align-items: center; flex: none; }
.tab span { overflow: hidden; }
.old { width: 41px; justify-content: space-between; padding-right: 12px; border-top: 1px solid #c8c8c8; background: #e6e6e6; color: #444; }
.old span { width: 6px; direction: rtl; }
.cur { width: 222px; margin-bottom: -1px; padding: 0 9px 0 11px; border: 1px solid #b5b5b5; border-bottom: 0; border-radius: 4px 4px 0 0; background: #fff; }
.cur span { flex: 1; min-width: 0; margin: 0 5px 0 4px; text-align: left; }
.x { font: 16px/16px "Liberation Sans", sans-serif; color: #999; }
.tabnew { width: 26px; border-right: 1px solid #c8c8c8; font: 20px/24px "Liberation Sans", sans-serif; color: #666; }

.content { flex: 1; min-height: 0; padding: 3px 0 0 11px; background: #fff; overflow: hidden; white-space: nowrap; }
.questions { margin: 0; padding: 0; list-style: none; }
.questions li { display: flex; align-items: center; height: 34px; padding: 0 0 3px 8px; border-top: 1px dotted #bbb; }
.q { width: 12px; height: 16px; flex: none; margin: 0 8px 4px 0; }
.questions a { font-size: 14px; line-height: 20px; color: #0000d0; text-decoration: none; }
.coin { width: 12px; height: 12px; flex: none; margin: 0 5px 0 7px; }
.questions b { margin-right: 7px; font: 13px/16px "Liberation Sans", sans-serif; color: #c8474a; }
.detail { height: 100%; padding: 8px 0 0 20px; border: solid #ccc; border-width: 1px 0 0 1px; }
.meta { margin: 0 0 9px; color: #999; }
.meta a { color: #2a2a80; text-decoration: none; }
.meta i { margin: 0 13px; }
.body { margin: 0; font-size: 14px; line-height: 24px; }
.answer { display: flex; flex-direction: column; width: 420px; height: 287px; margin-top: 16px; padding: 8px 8px 13px; border: 1px solid #a9c5e2; background: #e5f1fd; }
.insert { display: flex; align-items: center; align-self: flex-start; gap: 6px; height: 18px; color: #36505f; }
.answer textarea { display: block; flex: 1; padding: 6px 5px; border: 1px solid #a9c5e2; border-radius: 0; background: #fff; resize: none; outline: 0; line-height: 18px; }
.answer textarea::placeholder { color: #bbb; }

.marks { position: absolute; z-index: 9; inset: 0; width: 100%; height: 100%; pointer-events: none; }
```
